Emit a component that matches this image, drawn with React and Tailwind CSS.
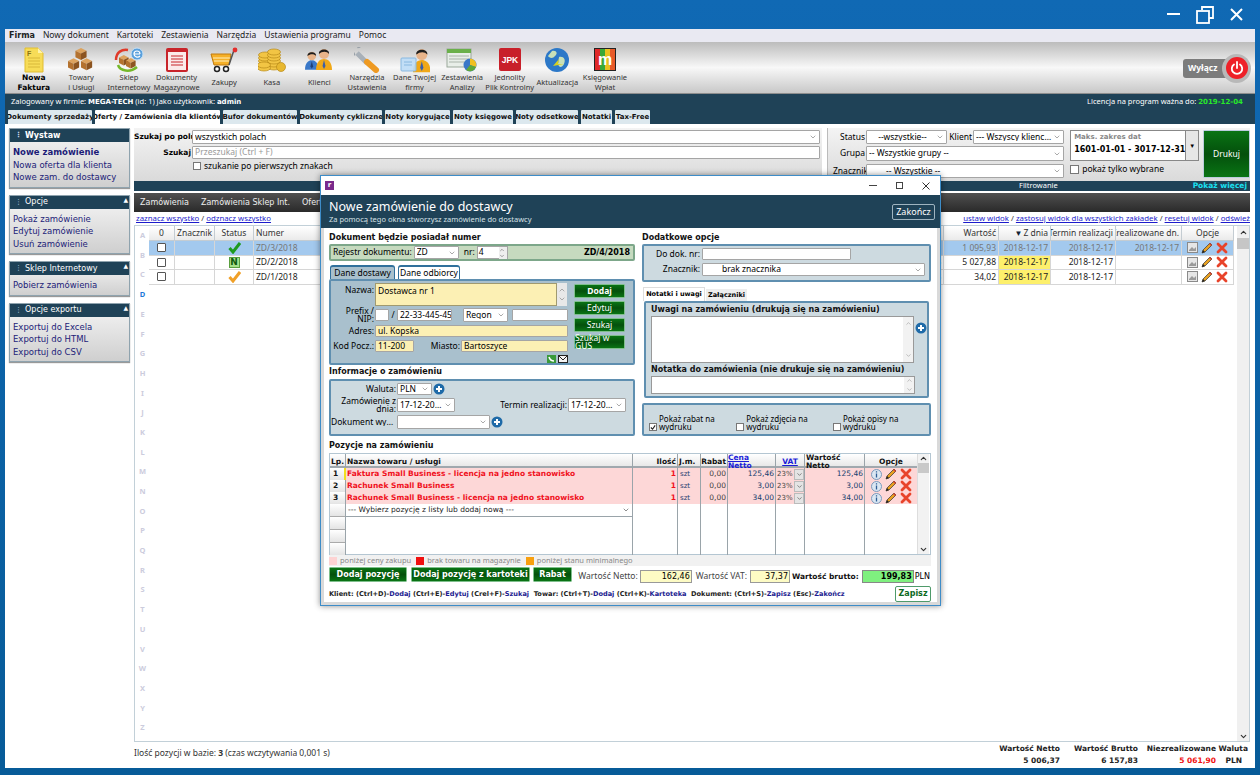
import React from 'react';
import { ChevronDown, ChevronUp } from 'lucide-react';

const verdana = "font-['DejaVu_Sans',sans-serif]";

const Cube = ({ x, y, s = 1 }) => (
    <g transform={`translate(${x} ${y}) scale(${s})`}>
        <polygon points="0,3 6,0 12,3 6,6" fill="#dda35e" />
        <polygon points="0,3 6,6 6,13 0,10" fill="#b4722f" />
        <polygon points="12,3 6,6 6,13 12,10" fill="#8c5420" />
    </g>
);

const Person = ({ x, y, s = 1, shirt = '#f0a818', tie = '#3a5ea8' }) => (
    <g transform={`translate(${x} ${y}) scale(${s})`}>
        <path d="M0 22 C0 14 4 11 8 11 C12 11 16 14 16 22 Z" fill={shirt} />
        <polygon points="8,12 9.5,18 8,21 6.5,18" fill={tie} />
        <circle cx="8" cy="6" r="5" fill="#e8b48a" />
        <path d="M3 6 C2 0 14 0 13 6 C11 3 6 3 3 6 Z" fill="#1e1e1e" />
    </g>
);

const ToolIcon = ({ name }) => {
    if (name === 'doc') return (
        <svg width="26" height="26" viewBox="0 0 26 26">
            <path d="M4 1 H17 L22 6 V25 H4 Z" fill="#f7dc57" stroke="#e0bd30" />
            <path d="M17 1 L22 6 H17 Z" fill="#fff3a8" />
            <path d="M7 11 H19 M7 14 H19 M7 17 H19 M7 20 H19" stroke="#d8b83a" />
            <text x="6" y="9" fontSize="7" fontWeight="700" fill="#8a7210" fontFamily="Liberation Sans">F</text>
        </svg>
    );
    if (name === 'boxes') return (
        <svg width="26" height="26" viewBox="0 0 28 26">
            <Cube x={8} y={0} /><Cube x={0} y={11} /><Cube x={14} y={11} />
        </svg>
    );
    if (name === 'shop') return (
        <svg width="30" height="26" viewBox="0 0 30 26">
            <Cube x={5} y={8} s={0.8} /><Cube x={12} y={11} s={0.8} />
            <path d="M2 13 C2 5 8 2 14 3" fill="none" stroke="#e03a2a" strokeWidth="2.5" />
            <path d="M4 18 C6 24 16 26 23 20" fill="none" stroke="#76b82a" strokeWidth="2.5" />
            <circle cx="23" cy="7" r="6" fill="#5aa0dc" stroke="#c8e0f4" />
            <path d="M20 7 H26 M26 7 C26 3 20 3 20 7 C20 10 24 11 26 9" fill="none" stroke="#fff" strokeWidth="1.2" />
        </svg>
    );
    if (name === 'list') return (
        <svg width="24" height="26" viewBox="0 0 24 26">
            <rect x="1" y="1" width="22" height="24" rx="2" fill="#c8242a" />
            <rect x="3" y="5" width="18" height="18" fill="#fbeaea" />
            <path d="M6 9 H18 M6 12 H18 M6 15 H18 M6 18 H18" stroke="#c8242a" />
        </svg>
    );
    if (name === 'cart') return (
        <svg width="28" height="26" viewBox="0 0 28 26">
            <path d="M1 7 H21 L19 18 H4 Z" fill="#f6b028" stroke="#c07a10" />
            <path d="M3 11 H20 M4 14 H19" stroke="#fff1c0" />
            <path d="M19 18 L24 3" stroke="#555" strokeWidth="1.5" />
            <circle cx="25" cy="3" r="2.4" fill="#e42c2c" />
            <circle cx="7" cy="22" r="2.5" fill="#fff" stroke="#222" strokeWidth="1.5" />
            <circle cx="16" cy="22" r="2.5" fill="#fff" stroke="#222" strokeWidth="1.5" />
        </svg>
    );
    if (name === 'coins') return (
        <svg width="28" height="26" viewBox="0 0 28 26">
            {[[7, 14], [7, 11], [7, 8], [16, 20], [16, 17], [16, 14], [16, 11], [16, 8], [16, 5], [6, 21], [6, 18]].map(([x, y], i) => (
                <ellipse key={i} cx={x} cy={y} rx="6.5" ry="3" fill="#f2c544" stroke="#b88a18" strokeWidth="0.7" />
            ))}
            <circle cx="23" cy="20" r="4.5" fill="#e8b830" stroke="#b88a18" strokeWidth="0.7" />
        </svg>
    );
    if (name === 'people') return (
        <svg width="30" height="26" viewBox="0 0 30 26">
            <Person x={1} y={4} s={0.85} shirt="#3a78c8" tie="#1e3f78" />
            <Person x={12} y={1} shirt="#f0a818" tie="#3a5ea8" />
        </svg>
    );
    if (name === 'wrench') return (
        <svg width="26" height="26" viewBox="0 0 26 26">
            <path d="M3 6 L13 16" stroke="#a8b0b8" strokeWidth="5" />
            <path d="M5 1 A5 5 0 1 0 1 7" fill="none" stroke="#98a0a8" strokeWidth="3" />
            <path d="M13 15 L22 23" stroke="#ee9a22" strokeWidth="6" strokeLinecap="round" />
        </svg>
    );
    if (name === 'card') return (
        <svg width="30" height="26" viewBox="0 0 30 26">
            <Person x={13} y={1} s={1.1} shirt="#f0a818" />
            <rect x="1" y="11" width="15" height="13" rx="1" fill="#bcdcf6" fillOpacity="0.9" stroke="#88b8e0" />
            <path d="M4 15 H12 M4 18 H12" stroke="#88b8e0" />
        </svg>
    );
    if (name === 'chart') return (
        <svg width="32" height="26" viewBox="0 0 32 26">
            <rect x="1" y="2" width="24" height="18" fill="#e8eee8" stroke="#9aa89a" />
            <rect x="1" y="2" width="24" height="4" fill="#6ab04a" />
            <path d="M3 9 H23 M3 12 H23 M3 15 H23" stroke="#aab4aa" />
            <circle cx="24" cy="18" r="6.5" fill="#3a78c8" />
            <path d="M24 18 V11.5 A6.5 6.5 0 0 1 30 20 Z" fill="#f2c020" />
            <path d="M24 18 L30 20 A6.5 6.5 0 0 1 20 23 Z" fill="#60a838" />
        </svg>
    );
    if (name === 'jpk') return (
        <svg width="24" height="26" viewBox="0 0 24 26">
            <rect x="1" y="1" width="22" height="23" rx="2" fill="#c8202a" />
            <text x="12" y="16" textAnchor="middle" fontSize="8.5" fontWeight="700" fill="#fff" fontFamily="Liberation Sans">JPK</text>
        </svg>
    );
    if (name === 'globe') return (
        <svg width="26" height="26" viewBox="0 0 26 26">
            <circle cx="13" cy="13" r="12" fill="#2c78c8" />
            <path d="M8 4 C13 3 14 7 11 9 C9 12 5 11 4 9 Z M15 10 C20 9 22 13 20 17 C18 21 15 21 14 17 Z" fill="#c8e0b8" />
            <path d="M9 19 L15 12 L14 17 L20 17 Z" fill="#d8d020" />
        </svg>
    );
    return (
        <svg width="24" height="26" viewBox="0 0 24 26">
            <rect x="1" y="1" width="22" height="23" fill="#222" />
            <rect x="2" y="2" width="5" height="21" fill="#e02828" />
            <rect x="7" y="2" width="5" height="21" fill="#38a838" />
            <rect x="12" y="2" width="5" height="21" fill="#e8c020" />
            <rect x="17" y="2" width="5" height="21" fill="#e85a28" />
            <text x="12" y="18" textAnchor="middle" fontSize="16" fontWeight="700" fill="#fff" fontFamily="Liberation Sans">m</text>
        </svg>
    );
};

const Plus = () => (
    <svg width="12" height="12" viewBox="0 0 12 12" className="shrink-0">
        <circle cx="6" cy="6" r="5.5" fill="#1e6aa8" />
        <path d="M6 3 V9 M3 6 H9" stroke="#fff" strokeWidth="2" />
    </svg>
);

const Pencil = () => (
    <svg width="12" height="12" viewBox="0 0 12 12">
        <path d="M1 11 L2 8 L9 1 L11 3 L4 10 Z" fill="#e8a020" stroke="#333" strokeWidth="0.7" />
        <path d="M1 11 L2 8 L4 10 Z" fill="#222" />
        <path d="M9 1 L11 3 L10 4 L8 2 Z" fill="#d84030" />
    </svg>
);

const Cross = () => (
    <svg width="12" height="12" viewBox="0 0 12 12">
        <path d="M2 2 L10 10 M10 2 L2 10" stroke="#e8432a" strokeWidth="2.8" strokeLinecap="round" />
    </svg>
);

const Info = () => (
    <svg width="11" height="11" viewBox="0 0 11 11">
        <circle cx="5.5" cy="5.5" r="5" fill="#dbe7f2" stroke="#7a9abc" />
        <path d="M5.5 4.5 V8.5 M5.5 2.2 V3.4" stroke="#2e5e96" strokeWidth="1.3" />
    </svg>
);

const Sheet = () => (
    <svg width="11" height="11" viewBox="0 0 11 11">
        <rect x="0.5" y="0.5" width="10" height="10" fill="#e6e6e6" stroke="#8a8a8a" />
        <path d="M2 8 L5 5 L7 7 L9 5 V9 H2 Z" fill="#9a9a9a" />
    </svg>
);

const Select = ({ className = '', text = '', center = false, textClass = '' }) => (
    <div className={`flex items-center bg-white border border-[#a5a5a5] rounded-[1px] pl-[2px] pr-[2px] ${className}`}>
        <span className={`flex-1 truncate ${center ? 'text-center' : ''} ${textClass}`}>{text}</span>
        <ChevronDown size={8} strokeWidth={1.5} className="text-[#555] shrink-0" />
    </div>
);

const Input = ({ className = '', children }) => (
    <div className={`flex items-center bg-white border border-[#a5a5a5] rounded-[1px] px-[2px] truncate ${className}`}>{children}</div>
);

const Check = ({ on = false, className = '' }) => (
    <span className={`w-[8px] h-[8px] border border-[#777] bg-white flex items-center justify-center shrink-0 ${className}`}>
        {on && (
            <svg width="7" height="7" viewBox="0 0 7 7"><path d="M1 3.5 L3 5.5 L6 1" fill="none" stroke="#222" strokeWidth="1.3" /></svg>
        )}
    </span>
);

const GreenBtn = ({ className = '', children }) => (
    <div className={`flex items-center justify-center border border-[#7fbf8c] rounded-[1px] bg-gradient-to-b from-[#0a7414] via-[#04500c] to-[#0a7414] text-white ${className}`}>{children}</div>
);

const toolbar = [
    { icon: 'doc', label: ['Nowa', 'Faktura'], bold: true },
    { icon: 'boxes', label: ['Towary', 'i Usługi'] },
    { icon: 'shop', label: ['Sklep', 'Internetowy'] },
    { icon: 'list', label: ['Dokumenty', 'Magazynowe'] },
    { icon: 'cart', label: ['Zakupy'] },
    { icon: 'coins', label: ['Kasa'] },
    { icon: 'people', label: ['Klienci'] },
    { icon: 'wrench', label: ['Narzędzia', 'Ustawienia'] },
    { icon: 'card', label: ['Dane Twojej', 'firmy'] },
    { icon: 'chart', label: ['Zestawienia', 'Analizy'] },
    { icon: 'jpk', label: ['Jednolity', 'Plik Kontrolny'] },
    { icon: 'globe', label: ['Aktualizacja'] },
    { icon: 'm', label: ['Księgowanie', 'Wpłat'] },
];

const tabs = [
    ['Dokumenty sprzedaży', 'w-[84px]'],
    ['Oferty / Zamówienia dla klientów', 'w-[125px] bg-white'],
    ['Bufor dokumentów', 'w-[74px]'],
    ['Dokumenty cykliczne', 'w-[82px]'],
    ['Noty korygujące', 'w-[65px]'],
    ['Noty księgowe', 'w-[60px]'],
    ['Noty odsetkowe', 'w-[62px]'],
    ['Notatki', 'w-[31px]'],
    ['Tax-Free', 'w-[35px]'],
];

const sidePanels = [
    { title: 'Wystaw', bold: true, arrow: false, items: ['Nowe zamówienie', 'Nowa oferta dla klienta', 'Nowe zam. do dostawcy'] },
    { title: 'Opcje', arrow: true, items: ['Pokaż zamówienie', 'Edytuj zamówienie', 'Usuń zamówienie'] },
    { title: 'Sklep Internetowy', arrow: true, items: ['Pobierz zamówienia'] },
    { title: 'Opcje exportu', arrow: true, items: ['Exportuj do Excela', 'Exportuj do HTML', 'Exportuj do CSV'] },
];

const SidePanel = ({ title, bold, arrow, items }) => (
    <div className="border border-[#8fa3ae] bg-gradient-to-b from-[#f6f6f6] to-[#cfcfcf] shadow-[0_1px_1px_#999]">
        <div className={`relative h-[13px] bg-[#1f4257] text-white flex items-center pl-[5px] gap-[3px] ${verdana} text-[8px] ${bold ? 'font-bold' : ''}`}>
            <span className="text-[7px] text-[#cde]">⋮</span>{title}
            {arrow && <span className="absolute right-[1px] top-[1px] text-[6px]">▲</span>}
        </div>
        <div className={`px-[3px] pt-[4px] pb-[3px] ${verdana} text-[8.5px] leading-[12.5px] text-[#1c1c78]`}>
            {items.map((it, i) => (
                <div key={it} className={bold && i === 0 ? 'font-bold' : ''}>{it}</div>
            ))}
        </div>
    </div>
);

const Status = ({ kind }) => {
    if (kind === 'n') return (
        <span className={`w-[11px] h-[11px] bg-[#a6e08a] border border-[#5aa040] text-[#0e5a0e] ${verdana} font-bold text-[9px] leading-none flex items-center justify-center`}>N</span>
    );
    return (
        <svg width="13" height="13" viewBox="0 0 13 13">
            <path d="M1.5 7 L5 11 L12 2" fill="none" stroke={kind === 'ok' ? '#1e9a1e' : '#f0a028'} strokeWidth="3" />
        </svg>
    );
};

const mainRows = [
    { sel: true, st: 'ok', nr: 'ZD/3/2018', peek: '3', val: '1 095,93', date: '2018-12-17', term: '2018-12-17', real: '2018-12-17' },
    { st: 'n', nr: 'ZD/2/2018', peek: '8', val: '5 027,88', date: '2018-12-17', term: '2018-12-17', real: '' },
    { st: 'or', nr: 'ZD/1/2018', peek: '8', val: '34,02', date: '2018-12-17', term: '2018-12-17', real: '' },
];

const mainCols = 'grid grid-cols-[26px_40px_39px_677px_13px_55px_52px_65px_66px_52px]';
const hCell = 'flex items-center border-r border-b border-[#c4ccd2] px-[2px] truncate';
const bCell = 'flex items-center border-r border-b border-[#d6d6d6] px-[2px] truncate';

const posRows = [
    { lp: 1, name: 'Faktura Small Business - licencja na jedno stanowisko', price: '125,46', total: '125,46' },
    { lp: 2, name: 'Rachunek Small Business', price: '3,00', total: '3,00' },
    { lp: 3, name: 'Rachunek Small Business - licencja na jedno stanowisko', price: '34,00', total: '34,00' },
];

const posCols = 'grid grid-cols-[16px_287px_45px_23px_27px_48px_29px_60px_52px]';
const pLine = 'border-r border-[#9aa4aa]';

const Heading = ({ className = '', children }) => (
    <div className={`${verdana} font-bold text-[8px] leading-none text-[#111] ${className}`}>{children}</div>
);

const Modal = () => (
    <div className="absolute left-[320px] top-[175px] w-[621px] h-[431px] flex flex-col bg-white border border-[#3d8cc8] shadow-[0_0_6px_rgba(0,0,0,0.45)]">
        <div className="h-[19px] flex items-center justify-between pl-[4px] pr-[10px] shrink-0">
            <span className={`w-[9px] h-[9px] bg-[#7a2a8c] text-white ${verdana} text-[7px] font-bold leading-none flex items-center justify-center`}>r</span>
            <div className="flex items-center gap-[19px] text-[#333]">
                <span className="w-[8px] h-px bg-[#444]" />
                <span className="w-[7px] h-[7px] border border-[#444]" />
                <svg width="8" height="8" viewBox="0 0 8 8"><path d="M0.5 0.5 L7.5 7.5 M7.5 0.5 L0.5 7.5" stroke="#333" /></svg>
            </div>
        </div>
        <div className="h-[33px] shrink-0 bg-[#1f4257] flex items-center justify-between pl-[8px] pr-[5px] text-white">
            <div>
                <div className="text-[12.5px] leading-[15px]">Nowe zamówienie do dostawcy</div>
                <div className="text-[7.5px] leading-[10px] text-[#d6e0e6]">Za pomocą tego okna stworzysz zamówienie do dostawcy</div>
            </div>
            <div className="h-[16px] w-[43px] border border-[#9fb4c0] rounded-[2px] flex items-center justify-center text-[9px]">Zakończ</div>
        </div>
        <div className="flex-1 flex flex-col border-x-[3px] border-b-[3px] border-[#d9d9d9] pl-[5px] pr-[6px] pt-[6px] min-h-0">
            <div className="flex gap-[7px]">
                {/* lewa kolumna */}
                <div className="w-[306px] shrink-0">
                    <Heading className="h-[10px]">Dokument będzie posiadał numer</Heading>
                    <div className="h-[17px] bg-[#c6dabf] border-2 border-[#7da78a] rounded-[2px] flex items-center pl-[2px] pr-[3px] gap-[2px]">
                        <span>Rejestr dokumentu:</span>
                        <Select className="w-[45px] h-[13px]" text="ZD" />
                        <span className="ml-[3px]">nr:</span>
                        <div className="w-[31px] h-[13px] bg-white border border-[#a5a5a5] flex items-center pl-[1px] justify-between">
                            4
                            <span className="flex flex-col w-[8px] text-[#555] bg-[#eee]"><ChevronUp size={6} /><ChevronDown size={6} /></span>
                        </div>
                        <span className={`ml-auto ${verdana} font-bold text-[8px]`}>ZD/4/2018</span>
                    </div>
                    <div className="h-[18px] flex items-end pl-[1px] gap-[3px]">
                        <div className="h-[14px] w-[65px] bg-[#a9c0cd] border-t-2 border-x border-[#30709c] rounded-t-[3px] flex items-center justify-center">Dane dostawy</div>
                        <div className="h-[14px] w-[62px] bg-white border-t-2 border-x border-[#30709c] rounded-t-[3px] flex items-center justify-center">Dane odbiorcy</div>
                    </div>
                    <div className="h-[86px] bg-[#a9c0cd] border-2 border-[#5f8fb0] rounded-[2px] pt-[2px] flex gap-[5px]">
                        <div className="w-[238px] flex flex-col">
                            <div className="h-[23px] flex">
                                <span className="w-[44px] text-right pr-[1px] pt-[3px]">Nazwa:</span>
                                <div className="w-[182px] bg-[#fcf0b4] border border-[#a09a70] px-[2px] pt-[1px] leading-[12px]">Dostawca nr 1</div>
                                <div className="w-[10px] bg-[#e8e8e8] flex flex-col items-center justify-between text-[#888] py-[3px]"><ChevronUp size={8} /><ChevronDown size={8} /></div>
                            </div>
                            <div className="h-[12px] mt-[3px] flex items-center">
                                <span className="w-[44px] text-right pr-[1px]">Prefix / NIP:</span>
                                <Input className="w-[14px] h-full" />
                                <span className="w-[8px] text-center">/</span>
                                <Input className="w-[55px] h-full">22-33-445-453</Input>
                                <Select className="w-[45px] h-[14px] ml-[11px]" text="Regon" />
                                <Input className="w-[56px] h-full ml-[4px]" />
                            </div>
                            <div className="h-[12px] mt-[4px] flex items-center">
                                <span className="w-[44px] text-right pr-[1px]">Adres:</span>
                                <Input className="w-[193px] h-full !bg-[#fcf0b4]">ul. Kopska</Input>
                            </div>
                            <div className="h-[12px] mt-[3px] flex items-center">
                                <span className="w-[44px] text-right pr-[1px]">Kod Pocz.:</span>
                                <Input className="w-[39px] h-full !bg-[#fcf0b4]">11-200</Input>
                                <span className="w-[47px] text-right pr-[1px]">Miasto:</span>
                                <Input className="w-[107px] h-full !bg-[#fcf0b4]">Bartoszyce</Input>
                            </div>
                            <div className="h-[8px] mt-[3px] pr-[1px] flex justify-end gap-[2px]">
                                <svg width="9" height="8" viewBox="0 0 9 8"><rect width="9" height="8" fill="#3a9a3a" /><path d="M2 2 C3 5 5 6 7 6" stroke="#fff" strokeWidth="1.6" fill="none" /></svg>
                                <svg width="10" height="8" viewBox="0 0 10 8"><rect x="0.5" y="0.5" width="9" height="7" fill="#f4f4f4" stroke="#222" /><path d="M1 1 L5 5 L9 1" stroke="#222" fill="none" /></svg>
                            </div>
                        </div>
                        <div className="w-[51px] flex flex-col gap-[3px] pt-px">
                            <GreenBtn className="h-[14px] font-bold">Dodaj</GreenBtn>
                            <GreenBtn className="h-[14px]">Edytuj</GreenBtn>
                            <GreenBtn className="h-[14px]">Szukaj</GreenBtn>
                            <GreenBtn className="h-[14px]">Szukaj w GUS</GreenBtn>
                        </div>
                    </div>
                    <Heading className="mt-[3px] h-[10px]">Informacje o zamówieniu</Heading>
                    <div className="h-[57px] mt-px bg-[#cddae0] border-2 border-[#5f8fb0] rounded-[2px] flex flex-col">
                        <div className="h-[12px] mt-[2px] flex items-center">
                            <span className="w-[66px] text-right pr-px">Waluta:</span>
                            <Select className="w-[35px] h-full" text="PLN" />
                            <span className="ml-px"><Plus /></span>
                        </div>
                        <div className="h-[14px] mt-[3px] flex items-center">
                            <span className="w-[66px] text-right pr-px">Zamówienie z dnia:</span>
                            <Select className="w-[58px] h-full" text="17-12-2018" />
                            <span className="w-[113px] text-right pr-px">Termin realizacji:</span>
                            <Select className="w-[58px] h-full" text="17-12-2018" />
                        </div>
                        <div className="h-[14px] mt-[3px] flex items-center">
                            <span className="w-[66px] text-right pr-px truncate">Dokument wystawił:</span>
                            <Select className="w-[93px] h-full" />
                            <span className="ml-px"><Plus /></span>
                        </div>
                    </div>
                </div>
                {/* prawa kolumna */}
                <div className="w-[289px] shrink-0">
                    <Heading className="h-[10px]">Dodatkowe opcje</Heading>
                    <div className="h-[38px] bg-[#cddae0] border-2 border-[#5f8fb0] rounded-[2px] flex flex-col pt-[2px] gap-[3px]">
                        <div className="h-[12px] flex items-center">
                            <span className="w-[58px] text-right pr-[2px]">Do dok. nr:</span>
                            <Input className="w-[149px] h-full" />
                        </div>
                        <div className="h-[13px] flex items-center">
                            <span className="w-[58px] text-right pr-[2px]">Znacznik:</span>
                            <Select className="w-[223px] h-full" text="brak znacznika" textClass="pl-[17px]" />
                        </div>
                    </div>
                    <div className="h-[19px] flex items-end pl-px gap-px">
                        <div className={`h-[14px] w-[62px] bg-white border border-b-0 border-[#ddd] flex items-center justify-center ${verdana} font-bold text-[6.5px]`}>Notatki i uwagi</div>
                        <div className={`h-[12px] w-[41px] bg-[#eee] flex items-center justify-center ${verdana} font-bold text-[6.5px]`}>Załączniki</div>
                    </div>
                    <div className="ml-[2px] w-[285px] h-[97px] bg-[#cddae0] border-2 border-[#5f8fb0] rounded-[2px] pl-[5px] pt-[3px]">
                        <Heading>Uwagi na zamówieniu (drukują się na zamówieniu)</Heading>
                        <div className="flex mt-[2px] gap-px">
                            <div className="w-[264px] h-[47px] bg-white border border-[#999] flex justify-end">
                                <div className="w-[10px] bg-[#f2f2f2] flex flex-col items-center justify-between py-[3px] text-[#999]"><ChevronUp size={7} /><ChevronDown size={7} /></div>
                            </div>
                            <span className="mt-[6px]"><Plus /></span>
                        </div>
                        <Heading className="mt-[3px]">Notatka do zamówienia (nie drukuje się na zamówieniu)</Heading>
                        <div className="w-[264px] h-[18px] mt-[2px] bg-white border border-[#999] flex justify-end">
                            <div className="w-[10px] bg-[#f2f2f2] flex flex-col items-center justify-between text-[#999]"><ChevronUp size={7} /><ChevronDown size={7} /></div>
                        </div>
                    </div>
                    <div className="h-[33px] mt-[5px] bg-[#cddae0] border-2 border-[#5f8fb0] rounded-[2px] flex items-end pb-[3px] pl-[5px] text-[8px]">
                        <Check on /><span className="ml-[2px] w-[81px]">Pokaż rabat na wydruku</span>
                        <Check /><span className="ml-[2px] w-[91px]">Pokaż zdjęcia na wydruku</span>
                        <Check /><span className="ml-[2px]">Pokaż opisy na wydruku</span>
                    </div>
                </div>
            </div>
            <Heading className="mt-[6px] h-[11px]">Pozycje na zamówieniu</Heading>
            <div className="h-[102px] w-[602px] flex bg-white border border-[#b4c6d2]">
                <div className="w-[587px] flex flex-col">
                    <div className={`${posCols} h-[14px] bg-gradient-to-b from-white to-[#e8e8e8] border-b-2 border-[#a0a8ae] ${verdana} font-bold text-[7.5px] text-[#111]`}>
                        <div className={`${pLine} flex items-center justify-center`}>Lp.</div>
                        <div className={`${pLine} flex items-center px-px`}>Nazwa towaru / usługi</div>
                        <div className={`${pLine} flex items-center justify-end px-px`}>Ilość</div>
                        <div className={`${pLine} flex items-center px-px`}>J.m.</div>
                        <div className={`${pLine} flex items-center justify-end px-px`}>Rabat</div>
                        <div className={`${pLine} flex items-center justify-center underline text-[#1c1cd8]`}>Cena Netto</div>
                        <div className={`${pLine} flex items-center justify-center underline text-[#1c1cd8]`}>VAT</div>
                        <div className={`${pLine} flex items-center justify-end px-px`}>Wartość Netto</div>
                        <div className="flex items-center justify-center">Opcje</div>
                    </div>
                    {posRows.map((r) => (
                        <div key={r.lp} className={`${posCols} h-[13px] bg-[#fdd7d7] ${verdana} text-[7.5px]`}>
                            <div className={`${pLine} bg-gradient-to-b from-white to-[#e4e4e4] font-bold flex items-center pl-[3px] text-[#111] ${r.lp === 1 ? 'border-r-2 border-r-[#f0e020]' : ''}`}>{r.lp}</div>
                            <div className={`${pLine} font-bold text-[#f0101c] flex items-center px-px truncate`}>{r.name}</div>
                            <div className={`${pLine} font-bold text-[#f0101c] flex items-center justify-end px-px`}>1</div>
                            <div className={`${pLine} flex items-center px-[2px] text-[#1f3c70] text-[7px]`}>szt</div>
                            <div className={`${pLine} flex items-center justify-end px-px text-[#444]`}>0,00</div>
                            <div className={`${pLine} flex items-center justify-end px-px text-[#16406e]`}>{r.price}</div>
                            <div className={`${pLine} flex items-center justify-between pl-px text-[#444] text-[7px]`}>23%
                                <span className="w-[10px] h-[11px] bg-[#e4e4e4] border border-[#bbb] flex items-center justify-center"><ChevronDown size={7} /></span>
                            </div>
                            <div className={`${pLine} flex items-center justify-end px-px text-[#16406e]`}>{r.total}</div>
                            <div className="flex items-center justify-center gap-[3px]"><Info /><Pencil /><Cross /></div>
                        </div>
                    ))}
                    <div className={`${posCols} flex-1 ${verdana} text-[7.5px]`}>
                        <div className={`${pLine} flex flex-col`}>
                            {[0, 1, 2, 3].map((i) => <div key={i} className="h-[13px] shrink-0 bg-gradient-to-b from-white to-[#e4e4e4] border-b border-[#aaa]" />)}
                        </div>
                        <div className={pLine}>
                            <div className="h-[13px] flex items-center justify-between px-[2px] border-b border-[#9aa4aa] text-[#222]">
                                --- Wybierz pozycję z listy lub dodaj nową ---
                                <ChevronDown size={8} className="text-[#555]" />
                            </div>
                        </div>
                        <div className={pLine} /><div className={pLine} /><div className={pLine} /><div className={pLine} /><div className={pLine} /><div className={pLine} /><div />
                    </div>
                </div>
                <div className="w-[13px] ml-auto mr-px bg-[#f2f2f2] border-l border-[#ddd] flex flex-col items-center justify-between text-[#333]">
                    <div className="w-full flex flex-col items-center"><ChevronUp size={9} strokeWidth={3} /><div className="w-full h-[10px] bg-[#c9c9c9]" /></div>
                    <ChevronDown size={9} strokeWidth={3} />
                </div>
            </div>
            <div className="h-[11px] w-[602px] bg-[#f1f1f1] flex items-center text-[#888] gap-[2px] text-[7.5px]">
                <span className="w-[8px] h-[8px] bg-[#fdd3d3]" /><span className="ml-px">poniżej ceny zakupu</span>
                <span className="w-[8px] h-[8px] bg-[#f01010] ml-[3px]" /><span className="ml-px">brak towaru na magazynie</span>
                <span className="w-[8px] h-[8px] bg-[#f8a010] ml-[3px]" /><span className="ml-px">poniżej stanu minimalnego</span>
            </div>
            <div className="flex items-start w-[602px] mt-[1px] h-[16px]">
                <GreenBtn className={`w-[78px] h-[15px] ${verdana} font-bold text-[8px]`}>Dodaj pozycję</GreenBtn>
                <GreenBtn className={`w-[119px] h-[15px] ml-[4px] ${verdana} font-bold text-[8px]`}>Dodaj pozycję z kartoteki</GreenBtn>
                <GreenBtn className={`w-[39px] h-[15px] ml-[3px] ${verdana} font-bold text-[8px]`}>Rabat</GreenBtn>
                <div className="ml-auto flex items-center h-[16px] pt-[3px]">
                    <span className="text-[#444] text-[8.5px]">Wartość Netto:</span>
                    <span className={`w-[52px] h-[13px] ml-[2px] bg-[#fdfbc4] border border-[#999] ${verdana} text-[8px] flex items-center justify-end pr-px`}>162,46</span>
                    <span className="text-[#444] text-[8.5px] ml-[4px]">Wartość VAT:</span>
                    <span className={`w-[40px] h-[13px] ml-[3px] bg-[#fdfbc4] border border-[#999] ${verdana} text-[8px] flex items-center justify-end pr-px`}>37,37</span>
                    <span className={`${verdana} font-bold text-[7.5px] ml-[2px] text-[#111]`}>Wartość brutto:</span>
                    <span className={`w-[52px] h-[13px] ml-[3px] bg-[#7ff07f] border border-[#888] ${verdana} font-bold text-[8px] flex items-center justify-end pr-px`}>199,83</span>
                    <span className={`${verdana} text-[8px] ml-px mr-px`}>PLN</span>
                </div>
            </div>
            <div className="flex items-center justify-between w-[602px] mt-[3px]">
                <span className={`${verdana} font-bold text-[6.6px] text-[#222]`}>
                    Klient: (Ctrl+D)-<b className="text-[#1c1c90]">Dodaj</b> (Ctrl+E)-<b className="text-[#1c1c90]">Edytuj</b> (Crel+F)-<b className="text-[#1c1c90]">Szukaj</b>&nbsp; Towar: (Ctrl+T)-<b className="text-[#1c1c90]">Dodaj</b> (Ctrl+K)-<b className="text-[#1c1c90]">Kartoteka</b>&nbsp; Dokument: (Ctrl+S)-<b className="text-[#1c1c90]">Zapisz</b> (Esc)-<b className="text-[#1c1c90]">Zakończ</b>
                </span>
                <div className={`w-[36px] h-[16px] border border-[#4f9a6a] rounded-[2px] bg-white text-[#0c6a1e] ${verdana} font-bold text-[8px] flex items-center justify-center`}>Zapisz</div>
            </div>
        </div>
    </div>
);

export default function App() {
    return (
        <div className="relative w-[1260px] h-[775px] overflow-hidden flex flex-col bg-gradient-to-b from-[#1069b4] to-[#075b98] text-black text-[8.5px] leading-none font-['Noto_Sans',sans-serif]">
            {/* pasek tytułu */}
            <div className="h-[29px] shrink-0 flex items-center justify-end pr-[17px]">
                <span className="w-[13px] h-[2px] bg-white mb-[1px]" />
                <svg width="18" height="18" viewBox="0 0 18 18" className="ml-[16px]">
                    <path d="M6 4 V1 H17 V12 H13" fill="none" stroke="#fff" strokeWidth="1.8" />
                    <rect x="1" y="5" width="12" height="12" fill="none" stroke="#fff" strokeWidth="1.8" />
                </svg>
                <svg width="13" height="13" viewBox="0 0 13 13" className="ml-[16px]">
                    <path d="M1 1 L12 12 M12 1 L1 12" stroke="#fff" strokeWidth="2" />
                </svg>
            </div>
            <div className="mx-[5px] mb-[7px] flex-1 min-h-0 flex flex-col bg-white">
                {/* menu */}
                <div className="h-[13px] shrink-0 bg-[#e9e9f2] flex items-center pl-[4px] gap-[8px] text-[8.5px] text-[#222]">
                    <span className={`font-bold ${verdana} text-[8px]`}>Firma</span>
                    {['Nowy dokument', 'Kartoteki', 'Zestawienia', 'Narzędzia', 'Ustawienia programu', 'Pomoc'].map((m) => <span key={m}>{m}</span>)}
                </div>
                {/* toolbar */}
                <div className="h-[52px] shrink-0 flex items-start pl-[5px] pr-[4px] pt-[5px] bg-gradient-to-b from-[#bcbcbc] via-[#f8f8f8] to-[#c8c8c8] border-b border-[#8d8d8d]">
                    {toolbar.map((t) => (
                        <div key={t.icon} className="w-[47.6px] shrink-0 h-[46px] flex flex-col items-center">
                            <div className="h-[26px] flex items-center justify-center"><ToolIcon name={t.icon} /></div>
                            <div className={`flex-1 flex flex-col items-center justify-center pb-[1px] text-[7.5px] leading-[9.5px] text-center whitespace-nowrap ${t.bold ? `${verdana} font-bold text-[7.5px]` : 'text-[#333]'}`}>
                                {t.label.map((l) => <div key={l}>{l}</div>)}
                            </div>
                        </div>
                    ))}
                    <div className="ml-auto self-center flex items-center pb-[4px]">
                        <span className="h-[19px] w-[45px] -mr-[6px] pl-[5px] rounded-l-[3px] bg-[#7c7c7c] text-white font-bold text-[8.5px] flex items-center">Wyłącz</span>
                        <span className="relative w-[29px] h-[29px] rounded-full bg-[#b8b8b8] flex items-center justify-center">
                            <span className="w-[22px] h-[22px] rounded-full bg-[#ee2028] flex items-center justify-center">
                                <svg width="14" height="14" viewBox="0 0 14 14"><path d="M4 3.5 A5.2 5.2 0 1 0 10 3.5 M7 1 V7" fill="none" stroke="#fff" strokeWidth="1.8" strokeLinecap="round" /></svg>
                            </span>
                        </span>
                    </div>
                </div>
                {/* info + zakładki */}
                <div className="h-[30px] shrink-0 bg-[#1f4257] flex flex-col text-white">
                    <div className="h-[15px] flex items-center justify-between pl-[6px] pr-[12px] text-[7.5px]">
                        <span>Zalogowany w firmie: <b className={`${verdana} text-[7px]`}>MEGA-TECH</b> (id: 1) Jako użytkownik: <b className={`${verdana} text-[7px]`}>admin</b></span>
                        <span>Licencja na program ważna do: <b className={`${verdana} text-[7px] text-[#28e828]`}>2019-12-04</b></span>
                    </div>
                    <div className="flex-1 flex items-end pl-[3px] gap-[3px] pb-0">
                        {tabs.map(([t, w]) => (
                            <div key={t} className={`${w} h-[14px] ${w.includes('bg-white') ? '' : 'bg-[#dce8ee]'} text-[#111] rounded-t-[1px] flex items-center justify-center whitespace-nowrap overflow-hidden ${verdana} font-bold text-[7px]`}>{t}</div>
                        ))}
                    </div>
                </div>
                {/* główny obszar */}
                <div className="flex-1 min-h-0 flex pt-[4px] pr-[5px]">
                    <div className="w-[121px] ml-[4px] shrink-0 flex flex-col gap-[7px]">
                        {sidePanels.map((p) => <SidePanel key={p.title} {...p} />)}
                    </div>
                    <div className="flex-1 ml-[4px] min-w-0 flex flex-col">
                        <div className="flex h-[53px] shrink-0 gap-[5px]">
                            <div className="w-[688px] bg-gradient-to-b from-[#f4f4f4] to-[#dadada] pt-[2px] flex flex-col">
                                <div className="flex items-center h-[14px]">
                                    <span className={`w-[58px] text-right pr-px ${verdana} font-bold text-[7.5px] whitespace-nowrap`}>Szukaj po polu</span>
                                    <Select className="w-[628px] h-full" text="wszystkich polach" />
                                </div>
                                <div className="flex items-center h-[13px] mt-[2px]">
                                    <span className={`w-[58px] text-right pr-px ${verdana} font-bold text-[7.5px]`}>Szukaj</span>
                                    <Input className="w-[628px] h-full text-[#999]">Przeszukaj (Ctrl + F)</Input>
                                </div>
                                <div className="flex items-center mt-[2px] ml-[59px] gap-[3px] h-[10px]"><Check /><span>szukanie po pierwszych znakach</span></div>
                            </div>
                            <div className="w-[423px] bg-gradient-to-b from-[#f4f4f4] to-[#dadada] border-l border-[#bbb] pt-[2px] pl-[5px] flex gap-[2px]">
                                <div className="w-[233px] flex flex-col gap-[2px]">
                                    <div className="flex items-center h-[14px]">
                                        <span className="w-[33px] text-right pr-px">Status</span>
                                        <Select className="w-[81px] h-full" text="--wszystkie--" center />
                                        <span className="w-[26px] text-right pr-px">Klient</span>
                                        <Select className="w-[91px] h-full" text="--- Wszyscy klienci ---" />
                                    </div>
                                    <div className="flex items-center h-[15px]">
                                        <span className="w-[33px] text-right pr-px">Grupa</span>
                                        <Select className="w-[198px] h-full" text="-- Wszystkie grupy --" />
                                    </div>
                                    <div className="flex items-center h-[14px] mt-px">
                                        <span className="w-[33px] text-right pr-px">Znacznik</span>
                                        <Select className="w-[198px] h-full" text="-- Wszystkie --" textClass="pl-[17px]" />
                                    </div>
                                </div>
                                <div className="w-[129px] ml-[3px] flex flex-col">
                                    <div className="h-[31px] flex border border-[#888] bg-white">
                                        <div className={`flex-1 pl-[3px] pt-[3px] ${verdana}`}>
                                            <div className="text-[7px] text-[#888] font-bold">Maks. zakres dat</div>
                                            <div className="mt-[5px] text-[8px] font-bold whitespace-nowrap">1601-01-01 - 3017-12-31</div>
                                        </div>
                                        <div className="w-[13px] bg-[#e6e6e6] border-l border-[#888] flex items-center justify-center text-[6px]">▼</div>
                                    </div>
                                    <div className="flex items-center gap-[3px] mt-[4px]"><Check className="w-[9px] h-[9px]" /><span>pokaż tylko wybrane</span></div>
                                </div>
                                <GreenBtn className="w-[47px] h-[48px] ml-[2px] !border-[#bcd]">Drukuj</GreenBtn>
                            </div>
                        </div>
                        <div className="h-[10px] shrink-0 bg-[#1f4257] relative flex items-center justify-end pr-[3px] text-white text-[7.5px]">
                            <span className="absolute left-[885px]">Filtrowanie</span>
                            <b className={`${verdana} text-[7.5px] text-[#19e0f0]`}>Pokaż więcej</b>
                        </div>
                        <div className={`h-[19px] shrink-0 mt-[2px] bg-gradient-to-b from-[#505050] to-[#2a2a2a] flex items-center pl-[6px] gap-[12px] text-[#eee] ${verdana} text-[8px]`}>
                            <span>Zamówienia</span><span>Zamówienia Sklep Int.</span><span>Oferty</span>
                        </div>
                        <div className="h-[13px] shrink-0 flex items-center justify-between pl-[2px] text-[7.8px] text-[#1c1ccc]">
                            <span><u>zaznacz wszystko</u> <span className="text-[#333]">/</span> <u>odznacz wszystko</u></span>
                            <span><u>ustaw widok</u> <span className="text-[#333]">/</span> <u>zastosuj widok dla wszystkich zakładek</u> <span className="text-[#333]">/</span> <u>resetuj widok</u> <span className="text-[#333]">/</span> <u>odśwież</u></span>
                        </div>
                        <div className="flex-1 min-h-0 flex border border-[#c2d0d8]">
                            <div className="w-[13px] shrink-0 ml-px flex flex-col text-[#ccd] font-bold text-[7.5px]">
                                {'ABCDEFGHIJKLMNOPQRSTUVWXYZ'.split('').map((l) => (
                                    <div key={l} className={`h-[19.7px] flex items-center justify-center ${l === 'D' ? 'text-[#1c78d8]' : ''}`}>{l}</div>
                                ))}
                            </div>
                            <div className="w-[1085px] shrink-0">
                                <div className={`${mainCols} h-[15px] bg-gradient-to-b from-white to-[#e9e9e9] text-[#333]`}>
                                    <div className={`${hCell} justify-center`}>0</div>
                                    <div className={`${hCell} justify-center`}>Znacznik</div>
                                    <div className={`${hCell} justify-center`}>Status</div>
                                    <div className={hCell}>Numer</div>
                                    <div className={hCell} />
                                    <div className={`${hCell} justify-end`}>Wartość</div>
                                    <div className={`${hCell} justify-end`}><span className="text-[8px] mr-px text-[#123]">▼</span>Z dnia</div>
                                    <div className={`${hCell} justify-end`}>Termin realizacji</div>
                                    <div className={`${hCell} justify-end`}>Zrealizowane dn.</div>
                                    <div className={`${hCell} justify-center`}>Opcje</div>
                                </div>
                                {mainRows.map((r) => (
                                    <div key={r.nr} className={`${mainCols} h-[14.5px] ${r.sel ? 'bg-[#a3c9ee] text-[#777]' : 'text-[#222]'}`}>
                                        <div className={`${bCell} justify-center`}><span className="w-[9px] h-[9px] bg-white border border-[#555] rounded-[1px]" /></div>
                                        <div className={bCell} />
                                        <div className={`${bCell} justify-center`}><Status kind={r.st} /></div>
                                        <div className={bCell}>{r.nr}</div>
                                        <div className={`${bCell} justify-end`}>{r.peek}</div>
                                        <div className={`${bCell} justify-end`}>{r.val}</div>
                                        <div className={`${bCell} justify-end ${r.sel ? '' : 'bg-[#fdf06c]'}`}>{r.date}</div>
                                        <div className={`${bCell} justify-end`}>{r.term}</div>
                                        <div className={`${bCell} justify-end`}>{r.real}</div>
                                        <div className={`${bCell} justify-center gap-[3px]`}><Sheet /><Pencil /><Cross /></div>
                                    </div>
                                ))}
                            </div>
                            <div className="w-[12px] shrink-0 ml-auto bg-[#f0f0f0] flex flex-col items-center justify-between text-[#333] pt-[2px]">
                                <div className="w-full flex flex-col items-center"><ChevronUp size={9} strokeWidth={3} /><div className="w-full h-[11px] mt-px bg-[#c6c6c6]" /></div>
                                <ChevronDown size={9} strokeWidth={3} />
                            </div>
                        </div>
                        <div className="h-[26px] shrink-0 flex items-start justify-between text-[#333]">
                            <span className="mt-[7px]">Ilość pozycji w bazie: <b>3</b> (czas wczytywania 0,001 s)</span>
                            <div className={`flex mr-[2px] ${verdana} font-bold text-[7.5px] text-[#222] leading-[12px] pt-[1px]`}>
                                <div className="w-[70px] text-right">Wartość Netto<div>5 006,37</div></div>
                                <div className="w-[78px] text-right">Wartość Brutto<div>6 157,83</div></div>
                                <div className="w-[78px] text-right">Niezrealizowane<div className="text-[#f01010]">5 061,90</div></div>
                                <div className="w-[32px] text-right">Waluta<div className="pr-[6px]">PLN</div></div>
                            </div>
                        </div>
                    </div>
                </div>
            </div>
            <Modal />
        </div>
    );
}
